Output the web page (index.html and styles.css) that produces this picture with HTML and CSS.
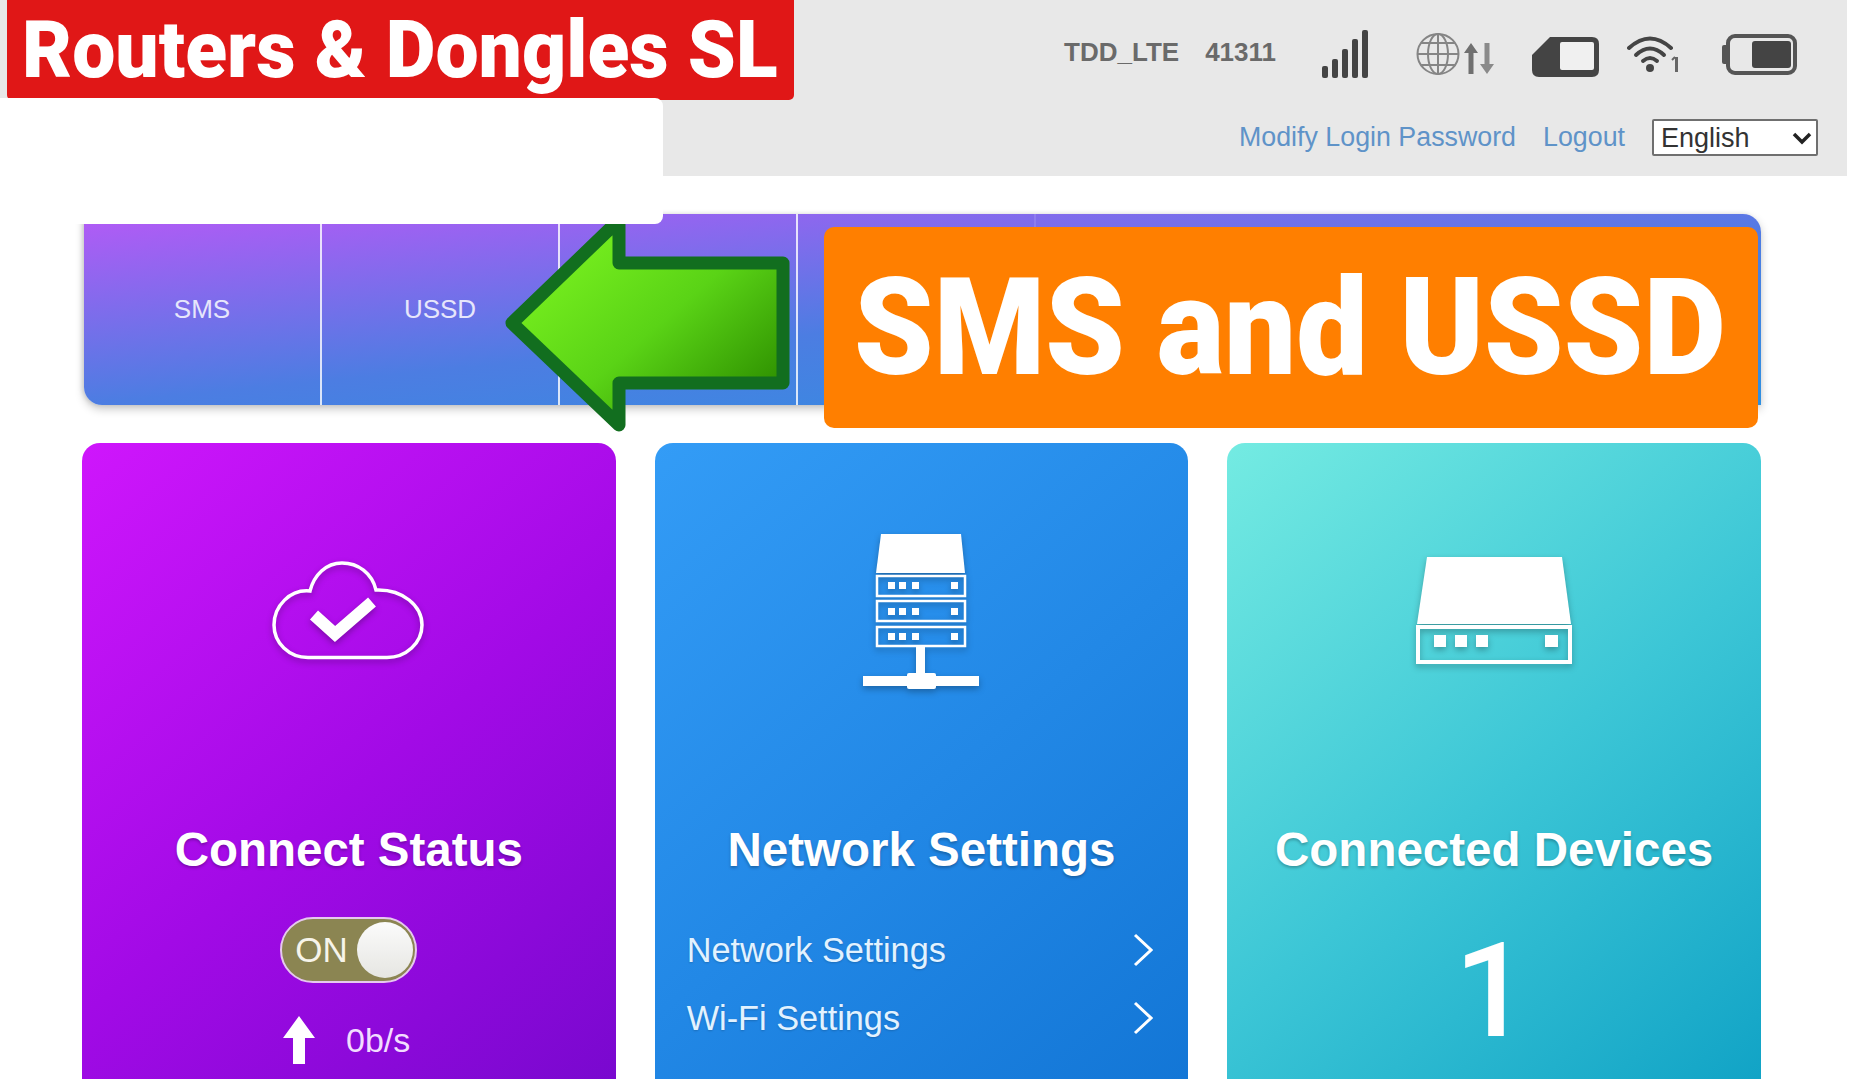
FILE: index.html
```html
<!DOCTYPE html>
<html lang="en">
<head>
<meta charset="utf-8">
<title>SMS and USSD</title>
<link rel="stylesheet" href="styles.css">
</head>
<body>
<header class="topbar">
  <div class="status-row">
    <span class="status-text">TDD_LTE</span>
    <span class="status-text plmn">41311</span>
    <svg class="ico signal" width="47" height="48" viewBox="0 0 47 48"><g fill="#444"><rect x="0" y="36" width="6" height="12" rx="2"/><rect x="10" y="29" width="6" height="19" rx="2"/><rect x="20" y="19" width="6" height="29" rx="2"/><rect x="30" y="9" width="6" height="39" rx="2"/><rect x="40" y="0" width="6" height="48" rx="2"/></g></svg>
    <svg class="ico globe" width="44" height="42" viewBox="0 0 44 42"><g fill="none" stroke="#858585" stroke-width="2"><ellipse cx="22" cy="21" rx="20.500" ry="20"/><ellipse cx="22" cy="21" rx="10" ry="20"/><path d="M22 1V41M2 21H42M5 10H39M5 32H39"/></g></svg>
    <svg class="ico arrows" width="32" height="31" viewBox="0 0 32 31"><path fill="#707070" d="M8 0L15 10H10.500V31H5.500V10H1Z"/><path fill="#8a8a8a" d="M24 31L17 21H21.500V0H26.500V21H31Z"/></svg>
    <svg class="ico sim" width="67" height="40" viewBox="0 0 67 40"><path fill="#444" d="M18 0H60Q67 0 67 7V33Q67 40 60 40H7Q0 40 0 33V18Z"/><rect x="28" y="5" width="34" height="28" rx="2" fill="#f0f0f0"/></svg>
    <svg class="ico wifi" width="52" height="37" viewBox="0 0 52 37"><g fill="none" stroke="#444" stroke-width="4" stroke-linecap="round"><path d="M2 12Q23 -7 44 12"/><path d="M9 19Q23 6 37 19"/><path d="M16 25Q23 19 30 25"/></g><circle cx="23" cy="32" r="4" fill="#444"/><rect x="48" y="21" width="3" height="15" fill="#666"/><path d="M48 21L45 24" stroke="#666" stroke-width="2"/></svg>
    <svg class="ico battery" width="75" height="41" viewBox="0 0 75 41"><rect x="0" y="11" width="6" height="19" rx="2" fill="#555"/><rect x="6" y="2" width="67" height="37" rx="7" fill="none" stroke="#555" stroke-width="4"/><rect x="30" y="7" width="39" height="27" rx="3" fill="#444"/></svg>
  </div>
  <div class="account-row">
    <a class="link" href="#">Modify Login Password</a>
    <a class="link logout" href="#">Logout</a>
    <span class="lang-wrap">
      <select class="lang"><option>English</option></select>
      <svg class="lang-chevron" width="20" height="13" viewBox="0 0 20 13"><path fill="none" stroke="#222" stroke-width="3.500" d="M2 2L10 10L18 2"/></svg>
    </span>
  </div>
</header>

<main class="main">
  <nav class="tabs">
    <a class="tab" href="#">SMS</a>
    <a class="tab" href="#">USSD</a>
    <a class="tab" href="#"></a>
    <a class="tab tab-faint" href="#"></a>
    <a class="tab tab-plain" href="#"></a>
    <a class="tab tab-plain" href="#"></a>
    <a class="tab tab-plain tab-last" href="#"></a>
  </nav>

  <section class="cards">
    <article class="card card-purple">
      <div class="card-icon">
        <svg class="shadowed" width="153" height="99" viewBox="0 0 153 99"><path fill="none" stroke="#fff" stroke-width="3.500" d="M36 96.500H115C134 96.500 150 82 150 64C150 45 131 28 104 29C100 12 86 2 70 2C54 2 42 14 38 30C18 28 2 45 2 64C2 82 17 96.500 36 96.500Z"/><path fill="none" stroke="#fff" stroke-width="12" d="M42 54L63 73L100 41"/></svg>
      </div>
      <h2 class="card-title">Connect Status</h2>
      <div class="toggle"><span class="toggle-label">ON</span><span class="knob"></span></div>
      <div class="speed">
        <svg width="34" height="48" viewBox="0 0 34 48"><path fill="#fff" d="M17 0L33 22H23V48H11V22H1Z"/></svg>
        <span>0b/s</span>
      </div>
    </article>

    <article class="card card-blue">
      <div class="card-icon icon-server">
        <svg class="shadowed" width="116" height="156" viewBox="0 0 116 156"><path fill="#fff" d="M18 0H98L102 39H13Z"/><g fill="none" stroke="#fff" stroke-width="2.500"><rect x="14" y="42" width="88" height="20"/><rect x="14" y="67" width="88" height="20"/><rect x="14" y="93" width="88" height="19"/></g><g fill="#fff"><rect x="25" y="48" width="7" height="7"/><rect x="36" y="48" width="7" height="7"/><rect x="49" y="48" width="7" height="7"/><rect x="88" y="48" width="7" height="7"/><rect x="25" y="74" width="7" height="7"/><rect x="36" y="74" width="7" height="7"/><rect x="49" y="74" width="7" height="7"/><rect x="88" y="74" width="7" height="7"/><rect x="25" y="99" width="7" height="7"/><rect x="36" y="99" width="7" height="7"/><rect x="49" y="99" width="7" height="7"/><rect x="88" y="99" width="7" height="7"/><rect x="53" y="112" width="9" height="30"/><rect x="0" y="142" width="116" height="10"/><rect x="44" y="139" width="29" height="16" rx="2"/></g></svg>
      </div>
      <h2 class="card-title">Network Settings</h2>
      <ul class="links">
        <li class="links-row"><span>Network Settings</span><svg width="20" height="34" viewBox="0 0 20 34"><path fill="none" stroke="#fff" stroke-width="3" d="M2 2L18 17L2 32"/></svg></li>
        <li class="links-row"><span>Wi-Fi Settings</span><svg width="20" height="34" viewBox="0 0 20 34"><path fill="none" stroke="#fff" stroke-width="3" d="M2 2L18 17L2 32"/></svg></li>
      </ul>
    </article>

    <article class="card card-teal">
      <div class="card-icon">
        <svg class="shadowed" width="156" height="107" viewBox="0 0 156 107"><path fill="#fff" d="M11 0H146L155 67H1Z"/><rect x="2" y="70" width="152" height="35" fill="none" stroke="#fff" stroke-width="4"/><g fill="#fff"><rect x="18" y="78" width="12" height="12"/><rect x="39" y="78" width="12" height="12"/><rect x="60" y="78" width="12" height="12"/><rect x="129" y="78" width="13" height="12"/></g></svg>
      </div>
      <h2 class="card-title">Connected Devices</h2>
      <div class="count">1</div>
    </article>
  </section>
</main>

<div class="banner banner-red"><span class="banner-text red-text">Routers &amp; Dongles SL</span></div>
<svg class="pointer" width="300" height="225" viewBox="0 0 300 225">
  <defs><linearGradient id="arrowFill" x1="0.150" y1="0.150" x2="0.950" y2="0.850"><stop offset="0" stop-color="#78f01f"/><stop offset="0.500" stop-color="#5ad316"/><stop offset="1" stop-color="#2e9000"/></linearGradient></defs>
  <path fill="url(#arrowFill)" stroke="#126e1f" stroke-width="13" stroke-linejoin="round" d="M12 111L119 8V51H283V171H119V213Z"/>
</svg>
<div class="logo-mask"></div>
<div class="banner banner-orange"><span class="banner-text orange-text">SMS and USSD</span></div>
</body>
</html>
```
FILE: styles.css
```css
* { box-sizing: border-box; }
html, body { margin: 0; padding: 0; height: 1079px; overflow: hidden; background: #fff; }
body { font-family: "Liberation Sans", Arial, sans-serif; position: relative; }

.topbar { height: 176px; margin-right: 3px; background: #e8e8e8; padding: 29px 30px 0 0; display: flex; flex-direction: column; align-items: flex-end; }
.status-row { display: flex; align-items: center; height: 50px; padding-right: 20px; }
.status-text { font-size: 26px; font-weight: 700; color: #6a6a6a; padding-bottom: 4px; }
.plmn { margin-left: 26px; }
.ico { display: block; flex: none; }
.signal { margin-left: 46px; }
.globe { margin-left: 47px; }
.arrows { margin-left: 3px; margin-top: 8px; }
.sim { margin-left: 37px; margin-top: 5px; }
.wifi { margin-left: 28px; }
.battery { margin-left: 43px; }

.account-row { display: flex; align-items: center; height: 37px; margin-top: 40px; }
.link { font-size: 26.800px; color: #5f93c8; text-decoration: none; }
.logout { margin-left: 27px; }
.lang-wrap { position: relative; display: block; margin-left: 27px; width: 166px; height: 37px; margin-right: -1px; }
.lang { appearance: none; display: block; width: 100%; height: 100%; font: 27px "Liberation Sans", Arial, sans-serif; color: #333; background: #fff; border: 2px solid #6f6f6f; border-radius: 2px; padding: 0 0 0 7px; }
.lang-chevron { position: absolute; right: 6px; top: 13px; pointer-events: none; }

.main { padding: 38px 89px 0 82px; }
.tabs { display: flex; height: 191px; margin-left: 2px; border-radius: 0 18px 0 18px; background: linear-gradient(174.500deg, #b45af6 0%, #4c7de2 54%, #2f90e0 100%); box-shadow: 0 4px 10px rgba(0,0,0,.22), -2px 0 4px rgba(0,0,0,.1); overflow: hidden; }
.tab { flex: 0 0 238px; display: flex; align-items: center; justify-content: center; border-right: 2px solid rgba(255,255,255,.8); color: #e6e6fb; font-size: 26px; text-decoration: none; }
.tab-faint { border-right-color: rgba(255,255,255,.12); }
.tab-plain { border-right: 0; }
.tab-last { flex: 1; }

.cards { display: grid; grid-template-columns: repeat(3, 1fr); gap: 39px; margin-top: 38px; }
.card { height: 700px; border-radius: 18px 18px 0 0; color: #fff; padding-top: 77px; }
.card-purple { background: linear-gradient(140deg, #cf16fc 0%, #a20ae6 50%, #7408cc 100%); }
.card-blue { background: linear-gradient(140deg, #339cf6 0%, #2288e6 50%, #1174d4 100%); }
.card-teal { background: linear-gradient(140deg, #74ebe2 0%, #3cc6d6 50%, #0c9fc4 100%); }
.card-icon { height: 180px; display: flex; align-items: center; justify-content: center; }
.icon-server { padding-top: 4px; }
.shadowed { filter: drop-shadow(0 3px 3px rgba(0,0,0,.28)); }
.card-title { margin: 120px 0 0; height: 60px; line-height: 60px; text-align: center; font-size: 47.500px; font-weight: 700; text-shadow: 0 2px 3px rgba(0,0,0,.25); }

.toggle { width: 137px; height: 66px; margin: 37px auto 0; border-radius: 33px; background: #8b8552; border: 2px solid #e6c8ee; display: flex; align-items: center; justify-content: space-between; padding: 0 2px 0 13px; }
.toggle-label { font-size: 35px; color: #f6f4ea; }
.knob { width: 56px; height: 56px; border-radius: 50%; background: linear-gradient(#fbfbfb, #e6e6e2); }
.speed { display: flex; align-items: center; margin: 33px 0 0 200px; font-size: 34px; color: #f2dcff; gap: 30px; }
.speed svg { display: block; }

.links { list-style: none; margin: 36px 0 0; padding: 0 35px 0 32px; }
.links-row { height: 68px; display: flex; align-items: center; justify-content: space-between; font-size: 34.300px; color: #e2f2ff; text-shadow: 0 1px 2px rgba(0,0,0,.18); }
.links-row svg { display: block; }

.count { margin-top: 43px; text-align: center; padding-right: 5px; font-family: Roboto, "Liberation Sans", sans-serif; font-weight: 500; font-size: 132px; line-height: 136px; }

.logo-mask { position: absolute; left: 0; top: 98px; width: 663px; height: 126px; background: #fff; border-radius: 0 8px 8px 0; z-index: 3; }
.banner { position: absolute; color: #fff; display: flex; align-items: center; overflow: hidden; font-family: Roboto, "Liberation Sans", sans-serif; font-weight: 900; white-space: nowrap; }
.banner-red { left: 7px; top: 0; width: 787px; height: 100px; background: #e01717; border-radius: 0 0 5px 5px; padding-left: 15px; z-index: 1; }
.banner-orange { left: 824px; top: 227px; width: 934px; height: 201px; background: #ff7f00; border-radius: 10px; padding-left: 30px; z-index: 4; }
.banner-text { display: inline-block; transform-origin: left center; }
.red-text { font-size: 79px; transform: scaleX(.973); }
.orange-text { font-size: 135px; transform: scaleX(.943); }
.pointer { position: absolute; left: 500px; top: 212px; z-index: 2; }
```
